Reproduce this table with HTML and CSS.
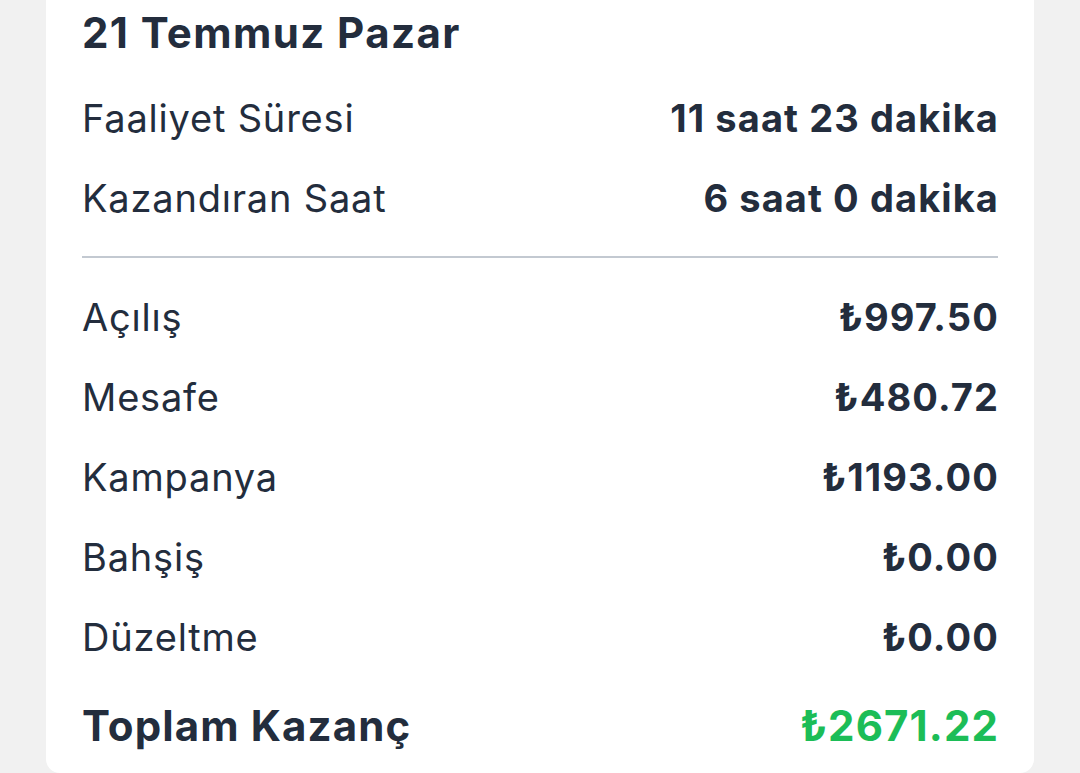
FILE: index.html
```html
<!DOCTYPE html>
<html lang="tr">
<head>
<meta charset="utf-8">
<title>Kazanç Detayı</title>
<link rel="stylesheet" href="styles.css">
</head>
<body>
<div class="card">
  <h1 class="title">21 Temmuz Pazar</h1>
  <div class="group">
    <div class="row"><span class="label">Faaliyet Süresi</span><span class="value">11 saat 23 dakika</span></div>
    <div class="row"><span class="label">Kazandıran Saat</span><span class="value">6 saat 0 dakika</span></div>
  </div>
  <div class="divider"></div>
  <div class="group">
    <div class="row"><span class="label">Açılış</span><span class="value">₺997.50</span></div>
    <div class="row"><span class="label">Mesafe</span><span class="value">₺480.72</span></div>
    <div class="row"><span class="label">Kampanya</span><span class="value">₺1193.00</span></div>
    <div class="row"><span class="label">Bahşiş</span><span class="value">₺0.00</span></div>
    <div class="row"><span class="label">Düzeltme</span><span class="value">₺0.00</span></div>
  </div>
  <div class="row total"><span class="label">Toplam Kazanç</span><span class="value green">₺2671.22</span></div>
</div>
</body>
</html>
```

FILE: styles.css
```css
html, body {
  margin: 0;
  padding: 0;
  background: #f1f1f1;
  height: 773px;
  overflow: hidden;
}
body {
  font-family: Inter, "Noto Sans", sans-serif;
  color: #232d3d;
}
.card {
  margin: 0 46px;
  background: #ffffff;
  border-radius: 0 0 14px 14px;
  padding: 8px 36px 0 36px;
  height: 765px;
}
.title {
  margin: 0;
  font-size: 42px;
  line-height: 50px;
  font-weight: 700;
  letter-spacing: 1.4px;
}
.group {
  display: flex;
  flex-direction: column;
}
.group:first-of-type {
  margin-top: 20px;
}
.row {
  display: flex;
  justify-content: space-between;
  align-items: baseline;
  height: 80px;
  line-height: 80px;
  font-size: 38px;
}
.label {
  font-weight: 400;
  letter-spacing: 0.8px;
}
.value {
  font-weight: 700;
  letter-spacing: 1.1px;
  margin-right: -1px;
}
.divider {
  height: 2px;
  background: #c3c9d1;
  margin: 18px 0 19px;
}
.total {
  font-size: 42px;
  margin-top: 9px;
}
.total .label {
  font-weight: 700;
  letter-spacing: 1.1px;
}
.total .value {
  letter-spacing: 1.1px;
}
.green {
  color: #1cbd57;
}
```
